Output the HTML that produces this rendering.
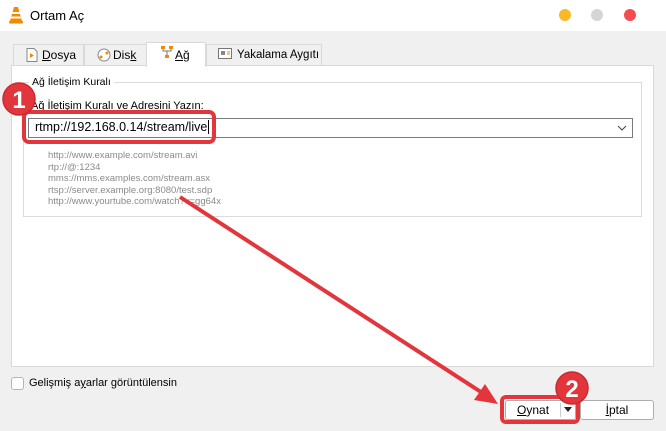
<!DOCTYPE html>
<html><head><meta charset="utf-8"><style>
*{margin:0;padding:0;box-sizing:border-box}
body{width:666px;height:431px;background:#f0f0f0;font-family:"Liberation Sans","DejaVu Sans",sans-serif;font-size:12px;color:#000;position:relative;overflow:hidden}
.abs{position:absolute;white-space:nowrap}
.title{left:0;top:0;width:666px;height:31px;background:#fff}
.tab{position:absolute;top:44px;height:22px;border:1px solid #d9d9d9;border-bottom:none;background:#f0f0f0;font-size:12px;line-height:20px;padding-left:28px;white-space:nowrap}
u{text-decoration:underline}
.ex{color:#8a8a8a;font-size:9.5px;line-height:11.5px}
.btn{position:absolute;top:400px;height:20px;background:#fff;border:1px solid #adadad;border-radius:3px;font-size:12px;line-height:18px;text-align:center}
</style></head><body>
<div class="abs title"></div>
<svg class="abs" style="left:8px;top:6px" width="16" height="18" viewBox="0 0 16 18"><path d="M6 1h4l4 14H2z" fill="#f08a00"/><path d="M4.6 6h6.8l.6 2H4z M3.4 10.5h9.2l.6 2H2.8z" fill="#fff"/><rect x="1" y="15" width="14" height="2.5" rx="1" fill="#f08a00"/></svg>
<div class="abs" style="left:30px;top:8px;font-size:13px">Ortam Aç</div>
<div class="abs" style="left:559px;top:9px;width:12px;height:12px;border-radius:50%;background:#fbb928"></div>
<div class="abs" style="left:591px;top:9px;width:12px;height:12px;border-radius:50%;background:#d5d5d5"></div>
<div class="abs" style="left:624px;top:9px;width:12px;height:12px;border-radius:50%;background:#f44c50"></div>

<div class="tab" style="left:13px;width:71px"><u>D</u>osya</div>
<div class="tab" style="left:84px;width:63px">Dis<u>k</u></div>
<div class="tab" style="left:146px;top:42px;height:25px;width:60px;background:#fff;z-index:2;line-height:24px"><u>A</u>ğ</div>
<div class="tab" style="left:206px;width:116px;padding-left:30px;font-size:11.5px">Yakalama Aygıtı</div>
<svg class="abs" style="left:26px;top:48px" width="12" height="14"><path d="M1 .5h7l3 3v10H1z" fill="#fff" stroke="#888"/><path d="M4 5l4 2.5-4 2.5z" fill="#f08a00"/></svg>
<svg class="abs" style="left:97px;top:48px;z-index:1" width="14" height="14"><circle cx="7" cy="7" r="6" fill="#fff" stroke="#888"/><circle cx="4" cy="9" r="1.5" fill="#f08a00"/><circle cx="10" cy="5" r="1.5" fill="#f08a00"/></svg>
<svg class="abs" style="left:160px;top:45px;z-index:3" width="14" height="14"><rect x="1" y="1" width="4" height="3" fill="#f08a00"/><rect x="9" y="1" width="4" height="3" fill="#f08a00"/><rect x="5" y="10" width="4" height="3" fill="#f08a00"/><path d="M3 4v2h8V4M7 6v4" stroke="#777" fill="none"/></svg>
<svg class="abs" style="left:218px;top:48px" width="16" height="13"><rect x=".5" y=".5" width="13" height="10" fill="#fff" stroke="#777"/><rect x="3" y="3" width="4" height="4" fill="#888"/><path d="M9 4h3M9 6h3" stroke="#f08a00"/></svg>

<div class="abs" style="left:11px;top:65px;width:643px;height:302px;background:#fff;border:1px solid #d9d9d9"></div>
<div class="abs" style="left:23px;top:82px;width:619px;height:135px;border:1px solid #dcdcdc"></div>
<div class="abs" style="left:29px;top:76px;background:#fff;padding:0 3px;font-size:10.5px">Ağ İletişim Kuralı</div>
<div class="abs" style="left:31px;top:100px;font-size:11px"><u>A</u>ğ İletişim Kuralı ve Adresini Yazın:</div>
<div class="abs" style="left:28px;top:118px;width:605px;height:20px;border:1px solid #7a7a7a;background:#fff"></div>
<div class="abs" style="left:35px;top:120px;font-size:12.5px">rtmp://192.168.0.14/stream/live<span style="border-left:1px solid #000;margin-left:1px"></span></div>
<svg class="abs" style="left:617px;top:125px" width="10" height="6"><path d="M1 1l4 4 4-4" stroke="#444" fill="none"/></svg>
<div class="abs ex" style="left:48px;top:150px">http://www.example.com/stream.avi<br>rtp://@:1234<br>mms://mms.examples.com/stream.asx<br>rtsp://server.example.org:8080/test.sdp<br>http://www.yourtube.com/watch?v=gg64x</div>

<div class="abs" style="left:11px;top:377px;width:13px;height:13px;border:1px solid #b5b5b5;border-radius:3px;background:#fff"></div>
<div class="abs" style="left:29px;top:377px;font-size:11px">Gelişmiş a<u>y</u>arlar görüntülensin</div>

<div class="btn" style="left:505px;width:71px;text-align:left;padding-left:11px"><u>O</u>ynat<span style="position:absolute;left:54px;top:2px;height:14px;border-left:1px solid #ccc"></span><svg style="position:absolute;left:58px;top:6px" width="8" height="5"><path d="M0 0h8L4 5z" fill="#222"/></svg></div>
<div class="btn" style="left:580px;width:74px"><u>İ</u>ptal</div>

<svg class="abs" style="left:0;top:0" width="666" height="431">
<rect x="24" y="112" width="190" height="30" rx="5" fill="none" stroke="#e2363c" stroke-width="4"/>
<rect x="502" y="397" width="76" height="25" rx="4" fill="none" stroke="#e2363c" stroke-width="4"/>
<line x1="180" y1="197" x2="484" y2="394" stroke="#e2363c" stroke-width="4"/>
<polygon points="498,404 474,400 485,384" fill="#e2363c"/>
<circle cx="19" cy="99" r="16" fill="#e2363c" stroke="#c92a30" stroke-width="1.5"/>
<text x="19" y="108" font-size="24" font-weight="bold" fill="#fff" text-anchor="middle" font-family="Liberation Sans">1</text>
<circle cx="572" cy="388" r="16" fill="#e2363c" stroke="#c92a30" stroke-width="1.5"/>
<text x="572" y="397" font-size="24" font-weight="bold" fill="#fff" text-anchor="middle" font-family="Liberation Sans">2</text>
</svg>
</body></html>
